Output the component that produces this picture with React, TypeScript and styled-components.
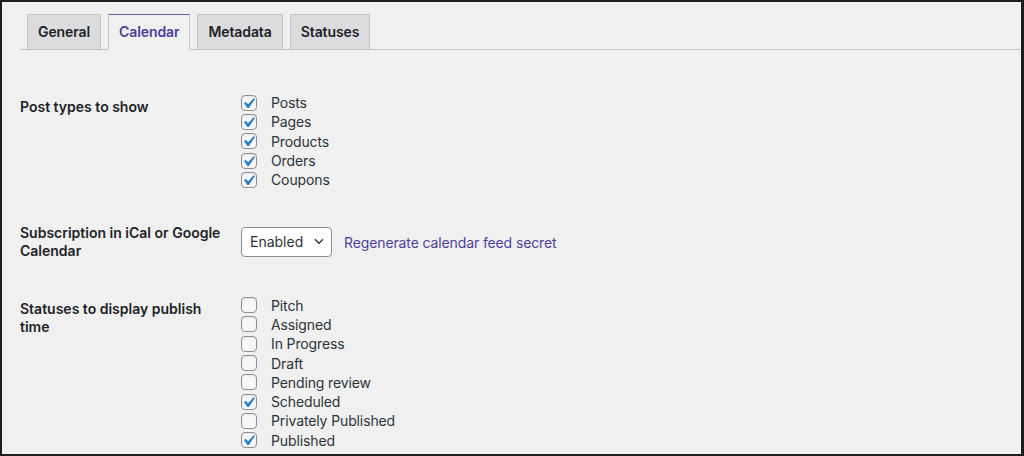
import React from "react";
import styled, { createGlobalStyle } from "styled-components";

const GlobalStyle = createGlobalStyle`
  html, body { margin: 0; padding: 0; background: #f0f0f1; }
  body { font-family: Inter, "Noto Sans", "Liberation Sans", sans-serif; }
  * { box-sizing: border-box; }
`;

const Frame = styled.div`
  width: 1024px;
  height: 456px;
  overflow: hidden;
  background: #f0f0f1;
  border-style: solid;
  border-color: #1d1d1d;
  border-width: 2px 3px 2px 2px;
  padding: 13px 0 0 18px;
`;

const TabBar = styled.nav`
  display: flex;
  align-items: flex-end;
  border-bottom: 1px solid #c3c4c7;
  height: 35px;
`;

const Tab = styled.a<{ $active?: boolean }>`
  display: block;
  margin-left: 7px;
  margin-bottom: -1px;
  height: 36px;
  padding: 5px 10px;
  font-size: 14px;
  line-height: 24px;
  font-weight: 600;
  letter-spacing: -0.1px;
  border: 1px solid #c3c4c7;
  border-bottom-color: ${(p) => (p.$active ? "#f0f0f1" : "#c3c4c7")};
  border-top-color: ${(p) => (p.$active ? "#6c5fae" : "#c3c4c7")};
  background: ${(p) => (p.$active ? "#f0f0f1" : "#dcdcde")};
  color: ${(p) => (p.$active ? "#4f4199" : "#1d2327")};
  text-decoration: none;
  white-space: nowrap;
`;

const Table = styled.div`
  margin-top: 28px;
  display: flex;
  flex-direction: column;
`;

const Row = styled.div<{ $center?: boolean }>`
  display: flex;
  align-items: ${(p) => (p.$center ? "center" : "flex-start")};
`;

const Th = styled.div`
  width: 221px;
  flex: none;
  padding: 20px 16px 20px 0;
  font-size: 14px;
  line-height: 18px;
  font-weight: 600;
  color: #1d2327;
`;

const Td = styled.div`
  padding: 15px 0;
  display: flex;
  align-items: center;
`;

const List = styled.div`
  display: flex;
  flex-direction: column;
`;

const Item = styled.label`
  display: flex;
  align-items: center;
  height: 19.3px;
  font-size: 14px;
  letter-spacing: -0.12px;
  color: #2c3338;
`;

const Box = styled.span`
  position: relative;
  width: 16px;
  height: 16px;
  flex: none;
  margin-right: 14px;
  border: 1px solid #8c8f94;
  border-radius: 4px;
  background: #f7f7f7;
  box-shadow: inset 0 1px 2px rgba(0, 0, 0, 0.08);
`;

const Check = styled.svg`
  position: absolute;
  top: -3px;
  left: -4px;
  width: 21px;
  height: 21px;
`;

const SelectWrap = styled.span`
  position: relative;
  display: inline-block;
`;

const Select = styled.select`
  appearance: none;
  -webkit-appearance: none;
  width: 91px;
  height: 30px;
  padding: 0 24px 0 8px;
  border: 1px solid #8c8f94;
  border-radius: 4px;
  background: #fff;
  color: #2c3338;
  font-family: inherit;
  font-size: 14px;
  line-height: 28px;
`;

const Chevron = styled.svg`
  position: absolute;
  right: 8px;
  top: 11px;
  width: 10px;
  height: 7px;
  pointer-events: none;
`;

const Link = styled.a`
  margin-left: 12px;
  font-size: 14px;
  letter-spacing: -0.12px;
  color: #4f4199;
  text-decoration: none;
`;

type Opt = { label: string; checked: boolean };

const CheckItem = ({ label, checked }: Opt) => (
  <Item>
    <Box>
      {checked && (
        <Check viewBox="0 0 20 20">
          <path
            d="M14.83 4.89l1.34.94-5.81 8.38H9.02L5.78 9.67l1.34-1.25 2.57 2.4z"
            fill="#2a7ec2"
          />
        </Check>
      )}
    </Box>
    {label}
  </Item>
);

const postTypes: Opt[] = [
  { label: "Posts", checked: true },
  { label: "Pages", checked: true },
  { label: "Products", checked: true },
  { label: "Orders", checked: true },
  { label: "Coupons", checked: true },
];

const statuses: Opt[] = [
  { label: "Pitch", checked: false },
  { label: "Assigned", checked: false },
  { label: "In Progress", checked: false },
  { label: "Draft", checked: false },
  { label: "Pending review", checked: false },
  { label: "Scheduled", checked: true },
  { label: "Privately Published", checked: false },
  { label: "Published", checked: true },
];

export default function App() {
  return (
    <>
      <GlobalStyle />
      <Frame>
        <TabBar>
          <Tab>General</Tab>
          <Tab $active>Calendar</Tab>
          <Tab>Metadata</Tab>
          <Tab>Statuses</Tab>
        </TabBar>
        <Table>
          <Row>
            <Th>Post types to show</Th>
            <Td>
              <List>
                {postTypes.map((o) => (
                  <CheckItem key={o.label} {...o} />
                ))}
              </List>
            </Td>
          </Row>
          <Row $center>
            <Th>Subscription in iCal or Google Calendar</Th>
            <Td>
              <SelectWrap>
                <Select defaultValue="on">
                  <option value="on">Enabled</option>
                  <option value="off">Disabled</option>
                </Select>
                <Chevron viewBox="0 0 10 7">
                  <path d="M1 1.2l4 4 4-4" fill="none" stroke="#2c3338" strokeWidth="1.4" />
                </Chevron>
              </SelectWrap>
              <Link href="#">Regenerate calendar feed secret</Link>
            </Td>
          </Row>
          <Row>
            <Th>Statuses to display publish time</Th>
            <Td>
              <List>
                {statuses.map((o) => (
                  <CheckItem key={o.label} {...o} />
                ))}
              </List>
            </Td>
          </Row>
        </Table>
      </Frame>
    </>
  );
}
